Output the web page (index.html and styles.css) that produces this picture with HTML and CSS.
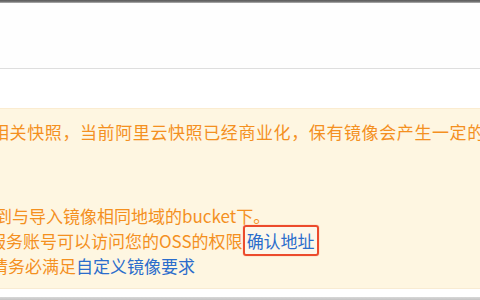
FILE: index.html
```html
<!DOCTYPE html>
<html lang="zh-CN">
<head>
<meta charset="utf-8">
<link rel="stylesheet" href="styles.css">
</head>
<body>
<div class="topbar"></div>
<div class="header"></div>
<div class="gap"></div>
<div class="notice">
  <div class="inner">
    <p class="line first">相关快照，当前阿里云快照已经商业化，保有镜像会产生一定的快照费用。</p>
    <div class="list">
      <p class="line l2">到与导入镜像相同地域的bucket下。</p>
      <p class="line l3">服务账号可以访问您的OSS的权限<a class="confirm">确认地址</a></p>
      <p class="line l4">请务必满足<a class="link">自定义镜像要求</a></p>
    </div>
  </div>
</div>
<div class="footgap"></div>
<div class="bottombar"></div>
</body>
</html>
```
FILE: styles.css
```css
html, body {
  margin: 0;
  padding: 0;
  background: #ffffff;
  overflow: hidden;
  width: 480px;
  height: 300px;
}
body {
  font-family: "Noto Sans CJK SC", "Noto Sans", sans-serif;
}
.topbar {
  height: 3px;
  background: linear-gradient(#5a5a5a, #777 60%, #bdbdbd);
}
.header {
  height: 65px;
  border-bottom: 1px solid #dedede;
  background: #fefefe;
}
.gap {
  height: 39px;
}
.notice {
  height: 179px;
  background: #fef6e1;
  border-top: 1px solid #fbecd0;
  border-bottom: 1px solid #f8ebd2;
  overflow: hidden;
}
.inner {
  padding-top: 10px;
}
.line {
  margin: 0;
  font-size: 17px;
  line-height: 25px;
  color: #f4901f;
  white-space: nowrap;
}
.first {
  text-indent: -8px;
  letter-spacing: 0.6px;
}
.list {
  margin-top: 59px;
}
.l2 { text-indent: -5px; }
.l3 { text-indent: -11px; }
.l4 { text-indent: -9px; }
.confirm {
  color: #2b6dcc;
  border: 2px solid #ec4b2c;
  border-radius: 3px;
  padding: 1px 2px;
  background: #fdf7ea;
  box-shadow: 0 0 1px #f0704c;
}
.link {
  color: #2b6dcc;
}
.footgap {
  height: 8px;
}
.bottombar {
  height: 4px;
  background: linear-gradient(#d8d8d8, #bdbdbd);
}
```
